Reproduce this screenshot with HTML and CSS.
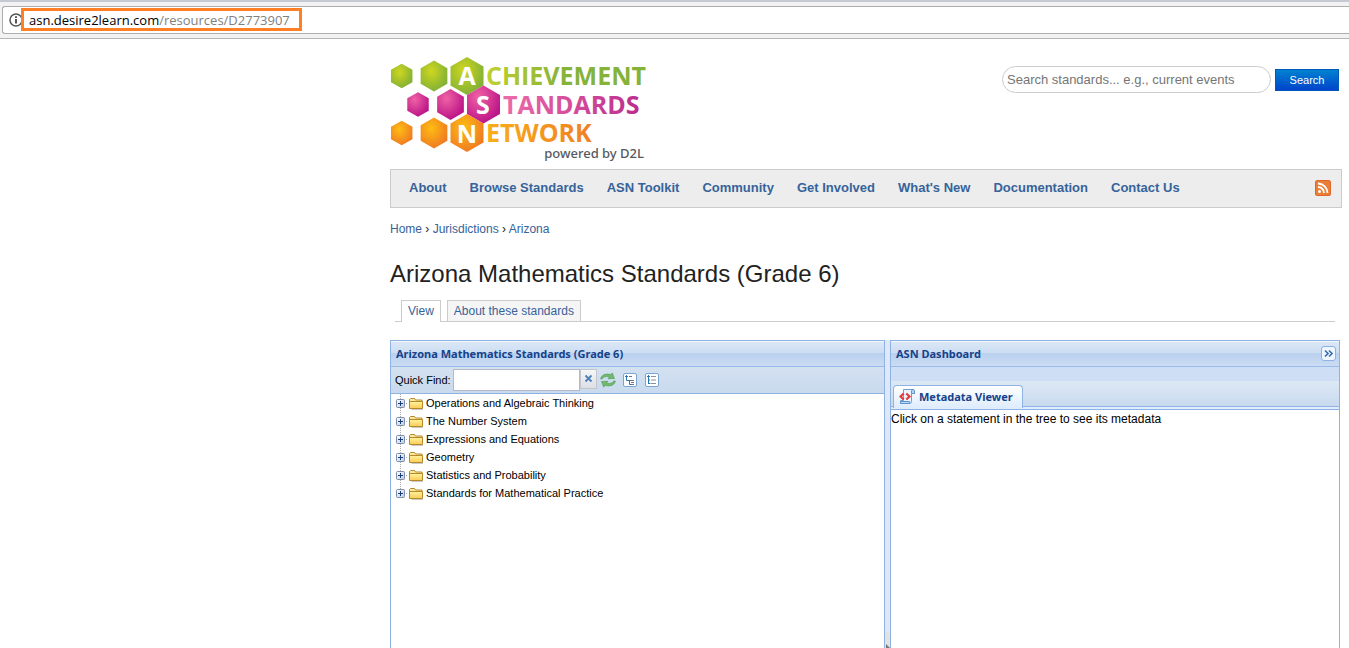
FILE: index.html
```html
<!DOCTYPE html>
<html lang="en">
<head>
<meta charset="utf-8">
<title>Arizona Mathematics Standards (Grade 6)</title>
<link rel="stylesheet" href="styles.css">
</head>
<body>
<svg class="defs" width="0" height="0" aria-hidden="true">
  <defs>
    <g id="folder">
      <path d="M2.500 13.500h12v-8" fill="none" stroke="#c9c9c9"/>
      <path d="M.5 11.500v-8l1-1h4l1 1.500h6.500v7.500z" fill="#fbe9a0" stroke="#b58a2b"/>
      <path d="M.5 5.500h13v7H.5z" fill="url(#fold)" stroke="#b58a2b"/>
    </g>
    <g id="plus">
      <rect x=".5" y=".5" width="8" height="8" rx="1" fill="url(#box)" stroke="#7b8da8"/>
      <path d="M2 4.500h5M4.500 2v5" stroke="#1c3f7c"/>
    </g>
    <linearGradient id="fold" x2="0" y2="1"><stop stop-color="#fff39c"/><stop offset="1" stop-color="#fbcb58"/></linearGradient>
    <linearGradient id="box" x2="1" y2="1"><stop stop-color="#fff"/><stop offset="1" stop-color="#bccbe2"/></linearGradient>
  </defs>
</svg>

<div class="browser">
  <div class="address">
    <svg class="info" width="14" height="14" viewBox="0 0 14 14" aria-hidden="true"><circle cx="7" cy="7" r="6" fill="#fff" stroke="#555" stroke-width="1.500"/><path d="M7 6v4.500M7 3.200v1.700" stroke="#444" stroke-width="1.800"/></svg>
    <div class="url"><span class="host">asn.desire2learn.com</span>/resources/D2773907</div>
  </div>
</div>

<div class="page">
  <header class="masthead">
    <a href="#" class="logo" aria-label="Achievement Standards Network">
      <svg width="260" height="107" viewBox="0 0 260 107">
        <defs>
          <radialGradient id="g" cx=".4" cy=".35" r=".65"><stop stop-color="#cfd71f"/><stop offset="1" stop-color="#83b135"/></radialGradient>
          <radialGradient id="p" cx=".35" cy=".3" r=".7"><stop stop-color="#ef62a4"/><stop offset="1" stop-color="#bd1588"/></radialGradient>
          <radialGradient id="o" cx=".4" cy=".35" r=".65"><stop stop-color="#fdbd12"/><stop offset="1" stop-color="#f07c22"/></radialGradient>
          <linearGradient id="gt"><stop stop-color="#c0d12f"/><stop offset=".5" stop-color="#85b239"/><stop offset="1" stop-color="#85b239"/></linearGradient>
          <linearGradient id="pt"><stop stop-color="#ed6ba9"/><stop offset="1" stop-color="#bb2e8d"/></linearGradient>
          <linearGradient id="ot"><stop stop-color="#f9ae19"/><stop offset="1" stop-color="#ef8024"/></linearGradient>
          <path id="hex" d="M0-19 16.500-9.500V9.500L0 19-16.500 9.500V-9.500z"/>
        </defs>
        <g fill="url(#g)"><use href="#hex" transform="translate(11.700 20) scale(.65)"/><use href="#hex" transform="translate(44 20) scale(.81)"/><use href="#hex" transform="translate(77 20)"/></g>
        <g fill="url(#p)"><use href="#hex" transform="translate(28 48.500) scale(.65)"/><use href="#hex" transform="translate(60.500 48.500) scale(.81)"/><use href="#hex" transform="translate(93.500 48.500)"/></g>
        <g fill="url(#o)"><use href="#hex" transform="translate(11.700 77) scale(.65)"/><use href="#hex" transform="translate(44 77) scale(.81)"/><use href="#hex" transform="translate(77 77)"/></g>
        <g class="initial"><text x="77" y="29">A</text><text x="93" y="58">S</text><text x="77" y="87">N</text></g>
        <g class="word"><text x="96" y="29" fill="url(#gt)">CHIEVEMENT</text><text x="113" y="58" fill="url(#pt)">TANDARDS</text><text x="96" y="86" fill="url(#ot)">ETWORK</text></g>
        <text class="powered" x="254" y="102">powered by D2L</text>
      </svg>
    </a>
    <form class="search">
      <input type="text" aria-label="Search standards" placeholder="Search standards... e.g., current events">
      <button type="button">Search</button>
    </form>
  </header>

  <nav class="menu">
    <a href="#">About</a><a href="#">Browse Standards</a><a href="#">ASN Toolkit</a><a href="#">Community</a><a href="#">Get Involved</a><a href="#">What's New</a><a href="#">Documentation</a><a href="#">Contact Us</a>
    <a href="#" class="rss" aria-label="RSS feed"><svg width="16" height="16" viewBox="0 0 16 16"><rect width="16" height="16" rx="2.500" fill="#e0662a"/><rect x="1" y="1" width="14" height="14" rx="2" fill="#e97f35"/><g fill="none" stroke="#fff" stroke-width="1.800"><path d="M3 7a6 6 0 0 1 6 6M3 3.500a9.500 9.500 0 0 1 9.500 9.500"/></g><circle cx="4.500" cy="11.500" r="1.500" fill="#fff"/></svg></a>
  </nav>

  <nav class="crumbs" aria-label="Breadcrumb"><a href="#">Home</a> › <a href="#">Jurisdictions</a> › <a href="#">Arizona</a></nav>
  <h1>Arizona Mathematics Standards (Grade 6)</h1>
  <nav class="tabs"><a href="#" class="current">View</a><a href="#">About these standards</a></nav>

  <main class="panels">
    <section class="panel">
      <h2 class="bar">Arizona Mathematics Standards (Grade 6)</h2>
      <div class="tools">
        <label for="find">Quick Find:</label>
        <div class="field"><input id="find" type="text"><button type="button" aria-label="Clear"><svg width="9" height="9" viewBox="0 0 9 9"><path d="m1.500 1.500 6 6m0-6-6 6" stroke="#4d80ba" stroke-width="1.800"/></svg></button></div>
        <button type="button" class="tool" aria-label="Refresh"><svg width="16" height="16" viewBox="0 0 16 16"><g stroke="#4a9a4c" stroke-width=".6" fill="#72b86e"><path d="M.7 7C1 3.500 5 1 10.500 2.600L12.300 1l2.200 5.500-6.500.3 1.500-1.600C6.500 4 3.500 4.600 2.200 7z"/><path d="M15.300 9c-.3 3.500-4.300 6-9.800 4.400L3.700 15 1.500 9.500 8 9.200l-1.500 1.600c3 1.200 6 .6 7.300-1.800z"/></g></svg></button>
        <button type="button" class="tool" aria-label="Expand all"><svg width="14" height="14" viewBox="0 0 14 14"><rect x=".5" y=".5" width="13" height="13" rx="1.500" fill="#fff" stroke="#7ba4d2"/><path d="M3.500 2v5.500H6M2 3.500h3M6.500 7v4.500H8" stroke="#2678b5" fill="none"/><path d="M6 3.500h3M7 7.500h4M8 9.500h3M8 11.500h3" stroke="#6d7680"/></svg></button>
        <button type="button" class="tool" aria-label="Collapse all"><svg width="14" height="14" viewBox="0 0 14 14"><rect x=".5" y=".5" width="13" height="13" rx="1.500" fill="#fff" stroke="#7ba4d2"/><path d="M3.500 2v9M2 3.500h3M3.500 7H5M3.500 10.500h2" stroke="#2678b5"/><path d="M6 3.500h5M6 7h5M6 10.500h5" stroke="#8b9299"/></svg></button>
      </div>
      <ul class="tree">
        <li><svg class="node" width="27" height="18" viewBox="0 0 27 18"><path d="M4.500 0v18M10 9.500h2" stroke="#aaa" stroke-dasharray="1 1"/><use href="#plus" y="5"/><use href="#folder" x="13" y="2"/></svg>Operations and Algebraic Thinking</li>
        <li><svg class="node" width="27" height="18" viewBox="0 0 27 18"><path d="M4.500 0v18M10 9.500h2" stroke="#aaa" stroke-dasharray="1 1"/><use href="#plus" y="5"/><use href="#folder" x="13" y="2"/></svg>The Number System</li>
        <li><svg class="node" width="27" height="18" viewBox="0 0 27 18"><path d="M4.500 0v18M10 9.500h2" stroke="#aaa" stroke-dasharray="1 1"/><use href="#plus" y="5"/><use href="#folder" x="13" y="2"/></svg>Expressions and Equations</li>
        <li><svg class="node" width="27" height="18" viewBox="0 0 27 18"><path d="M4.500 0v18M10 9.500h2" stroke="#aaa" stroke-dasharray="1 1"/><use href="#plus" y="5"/><use href="#folder" x="13" y="2"/></svg>Geometry</li>
        <li><svg class="node" width="27" height="18" viewBox="0 0 27 18"><path d="M4.500 0v18M10 9.500h2" stroke="#aaa" stroke-dasharray="1 1"/><use href="#plus" y="5"/><use href="#folder" x="13" y="2"/></svg>Statistics and Probability</li>
        <li><svg class="node" width="27" height="18" viewBox="0 0 27 18"><path d="M4.500 0v9M10 9.500h2" stroke="#aaa" stroke-dasharray="1 1"/><use href="#plus" y="5"/><use href="#folder" x="13" y="2"/></svg>Standards for Mathematical Practice</li>
      </ul>
    </section>
    <div class="splitter"><svg width="5" height="18" viewBox="0 0 5 18" aria-hidden="true"><path d="M0 0 5 4v14H0z" fill="#e2e2e2"/><path d="m1 14 4 4H1z" fill="#777"/></svg></div>
    <section class="panel">
      <div class="bar"><h2>ASN Dashboard</h2><button type="button" class="fold" aria-label="Collapse panel"><svg width="15" height="15" viewBox="0 0 15 15"><rect x=".5" y=".5" width="14" height="14" rx="2.500" fill="#eef6ff" stroke="#8db2e3"/><path d="m4 4.500 3 3-3 3M8 4.500l3 3-3 3" fill="none" stroke="#3b6fa9" stroke-width="1.700"/></svg></button></div>
      <div class="strip"><button type="button" class="viewer"><svg width="16" height="16" viewBox="0 0 16 16"><path d="M4.500 .5h10l1 1.500v2.500h-3v8q0 2-2 2h-9v-3h3z" fill="#eaf4ff" stroke="#6a9fd8"/><path d="M12.500 4.500V2q.5-1.500 2-1.500l1 1.500v2.500z" fill="#bcd9f5" stroke="#5f94cf"/><path d="M1.500 12.500h9v2h-9z" fill="#bcd9f5" stroke="#5f94cf"/><path d="M4.700 4.500 1.500 7.500 4.700 10.500M7.300 4.500l3.200 3-3.200 3" fill="none" stroke="#e23a3a" stroke-width="2.200"/></svg>Metadata Viewer</button></div>
      <p class="message">Click on a statement in the tree to see its metadata</p>
    </section>
  </main>
</div>
</body>
</html>
```
FILE: styles.css
```css
* { box-sizing: border-box; }
body {
  margin: 0;
  min-height: 100vh;
  display: flex;
  flex-direction: column;
  background: #fff;
  color: #222;
  font: 12px/18px "Liberation Sans", Arial, sans-serif;
}
a { color: #36639a; text-decoration: none; }
button, input { font: inherit; margin: 0; padding: 0; border: 0; }
svg { display: block; }
h1, h2, p, ul { margin: 0; padding: 0; font-weight: normal; }
.defs { position: absolute; }

.browser {
  border-top: 2px solid #c5c9d1;
  border-bottom: 1px solid #b5b5b5;
  background: #f2f2f2;
  padding: 4px 0 4px 2px;
}
.address {
  display: flex;
  align-items: center;
  height: 28px;
  padding: 0 0 1px 6px;
  background: #fff;
  border: 1px solid #adadad;
  border-right: 0;
  border-radius: 3px 0 0 3px;
}
.info { margin-right: -2px; }
.url {
  width: 281px;
  height: 23px;
  padding-left: 5px;
  border: 3px solid #ff7f27;
  background: #fff;
  color: #808080;
  font: 13px/18px "Open Sans", "Noto Sans", sans-serif;
}
.host { color: #000; }

.page {
  flex: 1;
  display: flex;
  flex-direction: column;
  margin: 0 7px 0 390px;
}
.masthead {
  display: flex;
  justify-content: space-between;
  align-items: flex-start;
  padding: 17px 3px 6px 0;
}
.initial, .word { font: bold 25px "Open Sans", sans-serif; }
.initial { fill: #fff; text-anchor: middle; }
.powered { font: 500 13px "Noto Sans", sans-serif; fill: #555961; text-anchor: end; }
.search { display: flex; align-items: center; gap: 4px; padding-top: 10px; }
.search input {
  width: 269px;
  height: 27px;
  padding: 0 4px;
  border: 1px solid #ccc;
  border-radius: 14px;
  font-size: 13px;
}
.search input::placeholder { color: #757575; opacity: 1; }
.search button {
  width: 64px;
  height: 22px;
  border: 1px solid #0058b8;
  background: linear-gradient(#0082d0, #0044cc);
  color: #fff;
  font-size: 11px;
}

.menu {
  display: flex;
  align-items: center;
  gap: 23px;
  height: 39px;
  padding: 0 10px 2px 18px;
  border: 1px solid #ccc;
  background: #ededed;
  font-size: 13px;
  font-weight: bold;
}
.rss { margin-left: auto; }
.crumbs { padding-top: 12px; }
h1 { margin-top: 21px; font-size: 24px; line-height: 30px; }

.tabs {
  display: flex;
  gap: 6px;
  margin: 11px 7px 0 5px;
  padding-left: 6px;
  border-bottom: 1px solid #ccc;
}
.tabs a {
  height: 21px;
  padding: 0 6px;
  border: 1px solid #ccc;
  border-bottom: 0;
  background: #f5f5f5;
  line-height: 20px;
}
.tabs .current { background: #fff; margin-bottom: -1px; height: 22px; }

.panels {
  flex: 1;
  display: grid;
  grid-template-columns: 495fr 5px 450fr;
  margin: 18px 2px 0 0;
  background: #dfe8f6;
}
.panel {
  display: flex;
  flex-direction: column;
  border: 1px solid #8db2e3;
  border-bottom: 0;
  background: #fff;
  color: #000;
  font-size: 11px;
}
.bar {
  display: flex;
  align-items: center;
  justify-content: space-between;
  height: 26px;
  padding: 0 3px 1px 5px;
  border-top: 1px solid #f3f8fd;
  border-bottom: 1px solid #99bbe8;
  background: linear-gradient(#dae7f6, #cddef3 44%, #b9d0ee 46%, #cbdcf3);
  color: #15428b;
}
.bar, .bar h2, .viewer { font: bold 11px/18px "Noto Sans", Tahoma, sans-serif; }
.tools {
  display: flex;
  align-items: center;
  height: 27px;
  padding: 0 0 1px 4px;
  border-bottom: 1px solid #8db2e3;
  background: linear-gradient(#d3e1f1, #c9daee);
}
.field { display: flex; margin: 0 3px 0 2px; }
.field input { width: 127px; height: 22px; border: 1px solid #b5b8c8; background: #fff; }
.field button {
  display: flex;
  align-items: center;
  justify-content: center;
  width: 17px;
  height: 20px;
  border: 1px solid #c3c6cc;
  background: linear-gradient(#f5f6f8, #dcdfe4);
}
.tool { margin-right: 7px; background: none; }
.tool + .tool { margin-right: 8px; }
.tree { list-style: none; padding-left: 5px; }
.tree li { display: flex; height: 18px; line-height: 18px; }
.node { margin-right: 3px; }

.splitter { display: flex; align-items: flex-end; }
.fold { background: none; }
.strip {
  display: flex;
  align-items: flex-end;
  height: 43px;
  padding: 0 2px 1px;
  border-bottom: 1px solid #8db2e3;
  background: linear-gradient(#cedff5 0 14px, #dde8f5 14px, #c9daef 39px, #8db2e3 39px 40px, #deecfd 40px);
}
.viewer {
  display: flex;
  align-items: center;
  gap: 4px;
  height: 23px;
  padding: 0 9px 1px 5px;
  border: 1px solid #8db2e3;
  border-bottom: 0;
  border-radius: 4px 4px 0 0;
  background: linear-gradient(#fff, #deecfd);
  color: #15428b;
}
.message { font-size: 12px; line-height: 18px; }
```
